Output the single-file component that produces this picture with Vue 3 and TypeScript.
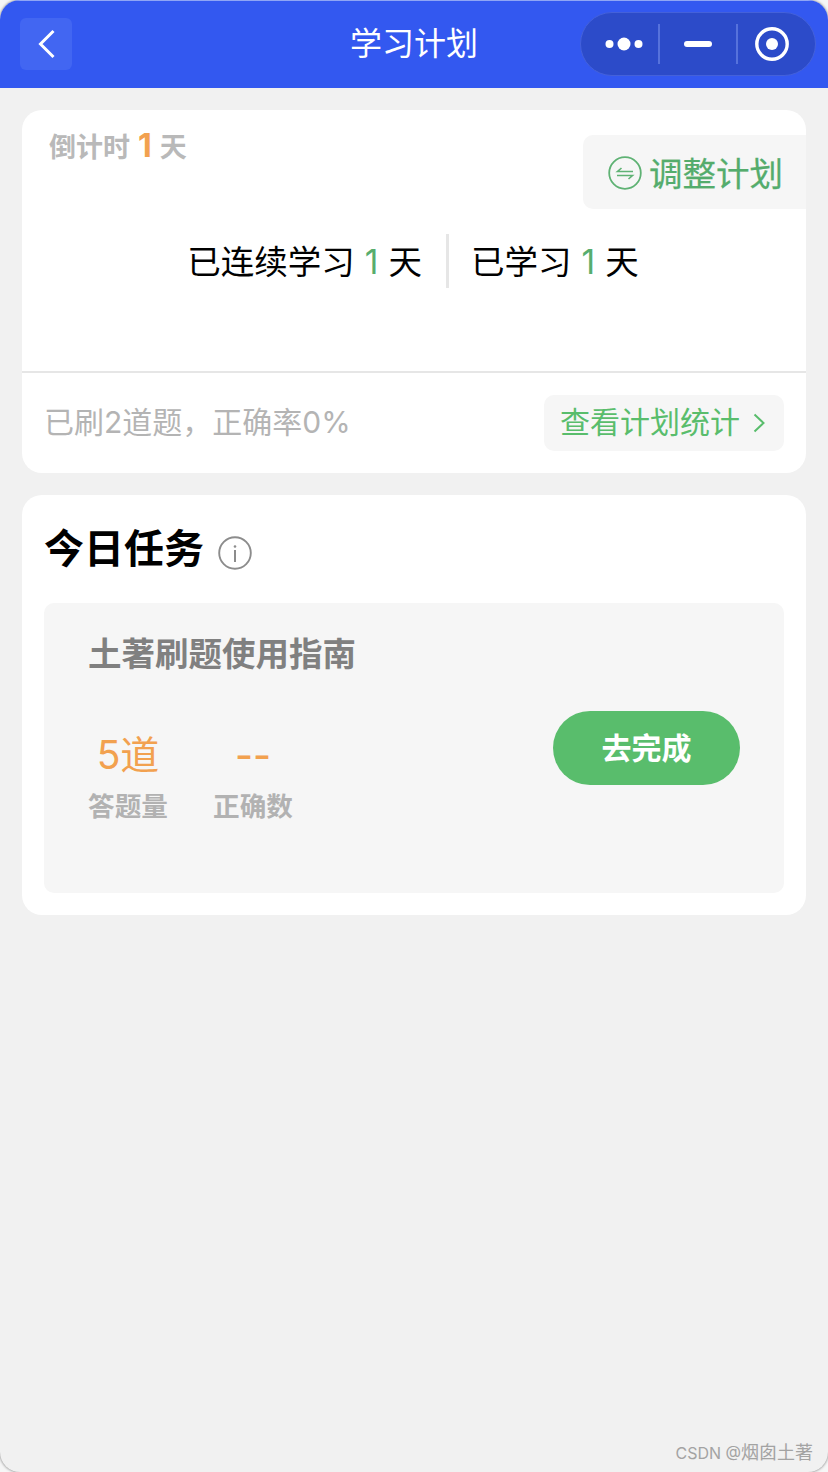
<script setup lang="ts">
const font = 'x'
void font
</script>

<template>
  <div class="page">
    <header class="nav">
      <div class="back">
        <svg width="18" height="30" viewBox="0 0 18 30" fill="none"><path d="M15.5 2 2.5 15l13 13" stroke="#fff" stroke-width="3"/></svg>
      </div>
      <div class="nav-title">学习计划</div>
      <div class="capsule">
        <svg class="cap-icon dots" width="38" height="16" viewBox="0 0 38 16"><circle cx="4.5" cy="8" r="4" fill="#fff"/><circle cx="19" cy="8" r="6.5" fill="#fff"/><circle cx="33.5" cy="8" r="4" fill="#fff"/></svg>
        <i class="cap-line"></i>
        <svg class="cap-icon" width="28" height="6" viewBox="0 0 28 6"><rect width="28" height="6" rx="3" fill="#fff"/></svg>
        <i class="cap-line"></i>
        <svg class="cap-icon target" width="34" height="34" viewBox="0 0 34 34" fill="none"><circle cx="17" cy="17" r="15.2" stroke="#fff" stroke-width="3.4"/><circle cx="17" cy="17" r="6" fill="#fff"/></svg>
      </div>
    </header>

    <main class="content">
      <section class="card plan">
        <div class="plan-top">
          <div class="countdown">倒计时<b>1</b>天</div>
          <div class="adjust">
            <svg width="34" height="34" viewBox="0 0 34 34" fill="none" stroke="#5fb274" stroke-width="1.8"><circle cx="17" cy="17" r="15.8"/><path d="M25 15.5H9.5l4-3.5M9 19.5h15.5l-4 3.5" stroke-width="1.6"/></svg>
            <span>调整计划</span>
          </div>
        </div>
        <div class="stats">
          <div class="stat left">已连续学习<em>1</em>天</div>
          <i class="stat-line"></i>
          <div class="stat right">已学习<em>1</em>天</div>
        </div>
        <div class="plan-foot">
          <span class="summary">已刷2道题，正确率0%</span>
          <div class="view">
            <span>查看计划统计</span>
            <svg width="12" height="20" viewBox="0 0 12 20" fill="none"><path d="M1.5 1.5 10.5 10l-9 8.5" stroke="#59bd6c" stroke-width="2"/></svg>
          </div>
        </div>
      </section>

      <section class="card today">
        <div class="today-head">
          <h2>今日任务</h2>
          <svg width="34" height="34" viewBox="0 0 34 34" fill="none"><circle cx="17" cy="17" r="15.8" stroke="#8c8c8c" stroke-width="1.9"/><circle cx="17" cy="10.5" r="1.3" fill="#8c8c8c"/><rect x="16" y="14" width="2" height="12" fill="#8c8c8c"/></svg>
        </div>
        <div class="task">
          <div class="task-title">土著刷题使用指南</div>
          <div class="task-body">
            <div class="metrics">
              <div class="metric">
                <div class="value">5道</div>
                <div class="label">答题量</div>
              </div>
              <div class="metric">
                <div class="value dash">--</div>
                <div class="label">正确数</div>
              </div>
            </div>
            <div class="go"><span>去完成</span></div>
          </div>
        </div>
      </section>
    </main>

    <div class="mark"><span class="latin">CSDN @</span>烟囱土著</div>
  </div>
</template>

<style>
html, body { margin: 0; background: #f6f6f6; }
</style>

<style scoped>
.page {
  position: relative;
  width: 828px;
  height: 1472px;
  overflow: hidden;
  border-radius: 20px;
  box-shadow: 0 0 3px rgba(0, 0, 0, 0.55);
  background: #f1f1f1;
  font-family: Inter, "Noto Sans CJK SC", sans-serif;
}
.nav {
  position: relative;
  height: 88px;
  box-sizing: border-box;
  border-top: 1px solid #8fa5f5;
  background: #3358f0;
  display: flex;
  align-items: center;
  justify-content: space-between;
  padding: 0 12px 0 20px;
}
.back {
  width: 52px;
  height: 52px;
  margin-top: -2px;
  border-radius: 6px;
  background: #4266f2;
  display: flex;
  align-items: center;
  justify-content: center;
}
.back svg { margin-left: 2px; }
.nav-title {
  position: absolute;
  left: 0;
  right: 0;
  top: 20px;
  text-align: center;
  color: #fff;
  font-size: 32px;
  line-height: 46px;
}
.capsule {
  width: 236px;
  height: 64px;
  margin-top: -2px;
  box-sizing: border-box;
  border: 1px solid #4461da;
  border-radius: 32px;
  background: #2c4bc9;
  display: grid;
  grid-template-columns: 77px 2px 1fr 2px 77px;
  align-items: center;
  justify-items: center;
}
.dots { margin-left: 8px; }
.target { margin-right: 10px; }
.cap-line { width: 2px; height: 40px; background: #5672dc; }
.content {
  padding: 22px 22px 0;
  display: flex;
  flex-direction: column;
  gap: 22px;
}
.card {
  background: #fff;
  border-radius: 20px;
}
.plan { height: 363px; display: flex; flex-direction: column; overflow: hidden; }
.plan-top { display: flex; justify-content: space-between; align-items: flex-start; height: 124px; }
.countdown {
  margin: 18px 0 0 27px;
  font-size: 27px;
  line-height: 36px;
  font-weight: 700;
  color: #b9b9b9;
}
.countdown b { margin: 0 8px; color: #f2a14f; font-size: 32px; font-weight: 700; }
.adjust {
  margin-top: 25px;
  width: 223px;
  height: 74px;
  box-sizing: border-box;
  padding-left: 25px;
  border-radius: 10px 0 0 10px;
  background: #f6f6f6;
  display: flex;
  align-items: center;
  gap: 7px;
  color: #54ac6c;
  font-size: 33.5px;
  -webkit-text-stroke: 0.25px #54ac6c;
}
.adjust svg { margin-top: 2px; }
.adjust span { margin-top: -2px; }
.stats { display: flex; align-items: center; height: 54px; }
.stat { margin-top: 1px; font-size: 33.5px; line-height: 54px; color: #000; white-space: nowrap; }
.stat em { margin: 0 10px; font-style: normal; color: #57ad6e; }
.left { width: 400px; text-align: right; }
.stat-line { width: 3px; height: 54px; margin: 0 22px 0 24px; background: #e6e6e6; }
.plan-foot {
  margin-top: 83px;
  flex: 1;
  border-top: 2px solid #e6e6e6;
  display: flex;
  align-items: center;
  justify-content: space-between;
  padding: 0 22px;
}
.summary { margin-top: -6px; font-size: 30px; color: #b4b4b4; }
.view {
  width: 240px;
  height: 56px;
  box-sizing: border-box;
  padding-left: 16px;
  border-radius: 10px;
  background: #f6f6f6;
  display: flex;
  align-items: center;
  gap: 13px;
  color: #59bd6c;
  font-size: 30px;
}
.view span { margin-top: -7px; }
.today { height: 420px; box-sizing: border-box; padding: 0 22px; }
.today-head { height: 108px; display: flex; align-items: center; gap: 14px; }
.today-head h2 { margin: 0; font-size: 40px; font-weight: 700; color: #000; line-height: 56px; }
.today-head svg { margin-top: 8px; }
.task {
  height: 290px;
  box-sizing: border-box;
  padding: 28px 44px 0;
  background: #f6f6f6;
  border-radius: 10px;
}
.task-title { font-size: 33.5px; line-height: 46px; font-weight: 700; color: #808080; }
.task-body { display: flex; justify-content: space-between; align-items: flex-start; margin-top: 34px; }
.metrics { display: flex; gap: 45px; margin-top: 20px; }
.metric { width: 80px; text-align: center; }
.value { font-size: 39px; line-height: 48px; color: #f2a14f; }
.dash { font-weight: 500; }
.label { margin-top: 9px; font-size: 26.6px; line-height: 36px; font-weight: 700; color: #b2b2b2; white-space: nowrap; }
.go {
  width: 187px;
  height: 74px;
  border-radius: 37px;
  background: #59bd6c;
  color: #fff;
  font-size: 30px;
  font-weight: 700;
  display: flex;
  align-items: center;
  justify-content: center;
}
.go span { margin-top: -4px; }
.mark {
  position: absolute;
  right: 15px;
  bottom: 6px;
  font-size: 18px;
  line-height: 26px;
  color: #a3a3a3;
}
.latin { font-size: 16px; }
</style>
